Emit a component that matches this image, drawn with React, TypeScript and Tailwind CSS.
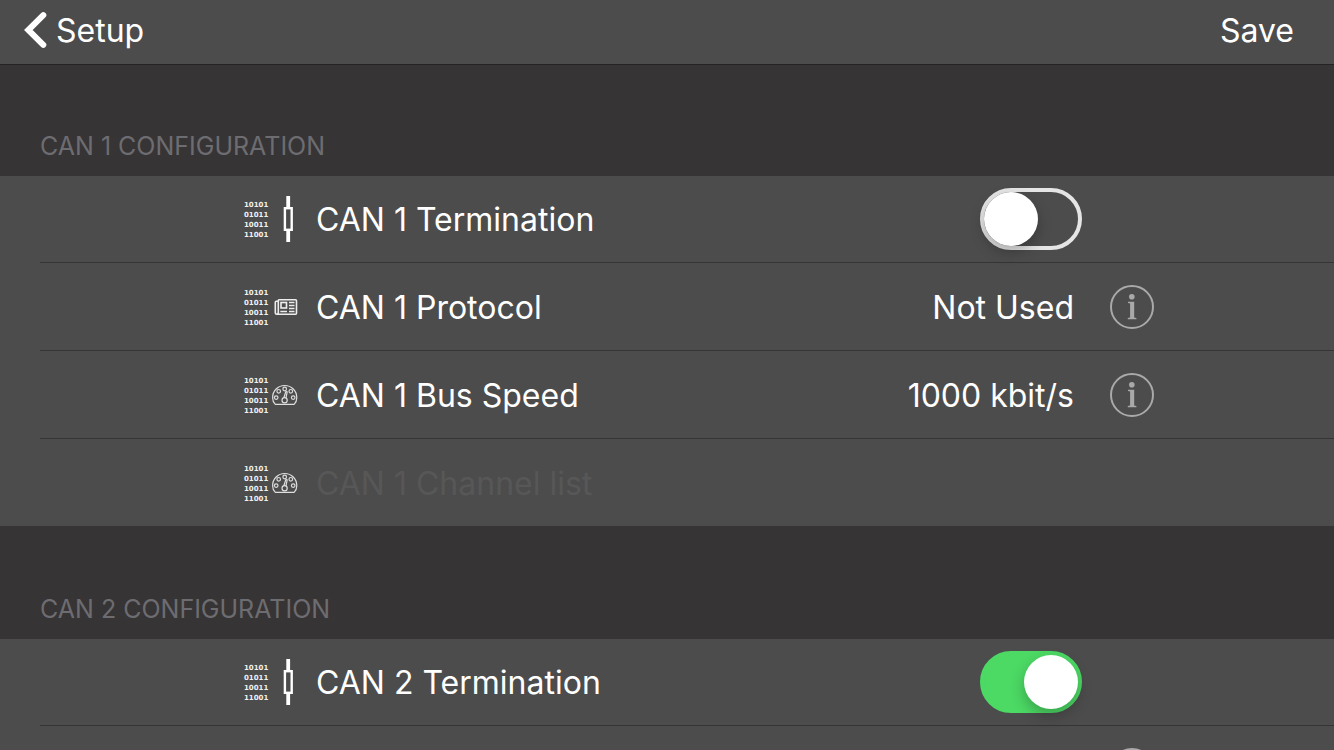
import { useState } from 'react';
import type { ReactNode } from 'react';

export default function App() {
  return (
    <div className="flex h-screen flex-col overflow-hidden bg-[#373435] text-white font-['Inter','Liberation_Sans',sans-serif]">
      <header className="flex h-[65px] shrink-0 items-center justify-between border-b border-[#252324] bg-[#4c4c4d] pr-10 pb-1 pl-6 text-[32px] leading-10">
        <button type="button" className="flex items-center gap-2">
          <svg className="h-9 w-6" viewBox="0 0 24 36" fill="none" stroke="currentColor" strokeWidth="6" strokeLinecap="round" strokeLinejoin="miter">
            <path d="M19.300 3.200 4.300 18l15 14.800" />
          </svg>
          <span className="pt-0.5">Setup</span>
        </button>
        <button type="button" className="pt-0.5">Save</button>
      </header>

      <main className="min-h-0 flex-1 overflow-y-auto [scrollbar-width:none]">
        <Section title="CAN 1 Configuration">
          <Row icon={<ResistorIcon />} label="CAN 1 Termination">
            <Toggle label="CAN 1 Termination" initial={false} />
          </Row>
          <Row icon={<NewsIcon />} label="CAN 1 Protocol">
            <Value text="Not Used" info="About CAN 1 Protocol" />
          </Row>
          <Row icon={<GaugeIcon />} label="CAN 1 Bus Speed">
            <Value text="1000 kbit/s" info="About CAN 1 Bus Speed" />
          </Row>
          <Row icon={<GaugeIcon />} label="CAN 1 Channel list" disabled />
        </Section>

        <Section title="CAN 2 Configuration">
          <Row icon={<ResistorIcon />} label="CAN 2 Termination">
            <Toggle label="CAN 2 Termination" initial={true} />
          </Row>
          <Row>
            <Value info="About CAN 2 Protocol" />
          </Row>
        </Section>
      </main>
    </div>
  );
}

function Section({ title, children }: { title: string; children: ReactNode }) {
  return (
    <section className="not-first:pt-0.5">
      <h2 className="flex h-[111px] items-end px-10 pb-3.5 text-[25px] leading-8 uppercase text-[#6d6c71]">{title}</h2>
      <ul className="bg-[#4c4c4d] pl-10">{children}</ul>
    </section>
  );
}

type RowProps = { icon?: ReactNode; label?: string; disabled?: boolean; children?: ReactNode };

function Row({ icon, label, disabled, children }: RowProps) {
  return (
    <li className="flex h-[88px] items-center border-t border-[#373436] pr-[180px] pl-[204px] text-[32px] leading-10 first:h-[86px] first:border-t-0">
      {icon && (
        <div className="flex shrink-0 items-center">
          <BinaryDigits />
          {icon}
        </div>
      )}
      <span className={`ml-[18px] flex-1 pt-0.5 ${disabled ? 'text-[#575757]' : ''}`}>{label}</span>
      {children}
    </li>
  );
}

function Toggle({ label, initial }: { label: string; initial: boolean }) {
  const [on, setOn] = useState(initial);
  return (
    <input
      type="checkbox"
      role="switch"
      aria-label={label}
      checked={on}
      onChange={(e) => setOn(e.target.checked)}
      className="mr-[72px] h-[62px] w-[102px] shrink-0 appearance-none rounded-full border-4 border-[#e5e5e5] transition-colors before:block before:size-[54px] before:rounded-full before:bg-white before:shadow-[0_6px_14px_rgba(0,0,0,0.25)] before:transition-transform checked:border-[#4cd964] checked:bg-[#4cd964] checked:before:translate-x-10"
    />
  );
}

function Value({ text, info }: { text?: string; info: string }) {
  return (
    <div className="flex items-center gap-9">
      {text && <span className="pt-0.5">{text}</span>}
      <button type="button" aria-label={info} className="text-[#a9a9a9]">
        <svg className="size-11" viewBox="0 0 44 44" fill="none">
          <circle cx="22" cy="22" r="21" stroke="currentColor" strokeWidth="2" />
          <circle cx="21.800" cy="11.800" r="2.800" fill="currentColor" />
          <path d="M18 16.800h6.200v15.700l2.200.5v1.200h-8.600V33l2.300-.5V18.600l-2.100-.5z" fill="currentColor" />
        </svg>
      </button>
    </div>
  );
}

/* Icons */

function BinaryDigits() {
  return (
    <div aria-hidden="true" className="w-[25px] pt-0.5 font-['DejaVu_Sans',sans-serif] text-[7px] leading-[10px] font-bold text-[#f0f0f0]">
      <div>10101</div>
      <div>01011</div>
      <div>10011</div>
      <div>11001</div>
    </div>
  );
}

function ResistorIcon() {
  return (
    <svg className="h-12 w-[29px]" viewBox="0 0 29 48" fill="none" stroke="white">
      <path d="M19.200 1v12M19.200 35v12" strokeWidth="3.800" />
      <rect x="15.900" y="13.200" width="6.800" height="21.600" strokeWidth="2.400" />
    </svg>
  );
}

function NewsIcon() {
  return (
    <svg className="h-12 w-[29px]" viewBox="0 0 29 48" fill="none" stroke="#ededed" strokeWidth="1.600">
      <path d="M9.300 16.700h17.200a1 1 0 0 1 1 1v12.600a1 1 0 0 1-1 1H8a1.700 1.700 0 0 1-1.700-1.700V19.300a1 1 0 0 1 1-1h2" />
      <path d="M9.300 16.700v13a1.600 1.600 0 0 1-1.300 1.600" />
      <rect x="12" y="19.500" width="5.500" height="5.500" />
      <path d="M20 19.500h5.500M20 22.500h5.500M20 25.500h5.500M11.300 28.500H18M20 28.500h5.500" strokeWidth="1.300" />
    </svg>
  );
}

function GaugeIcon() {
  return (
    <svg className="h-12 w-[29px]" viewBox="0 0 29 48" fill="none" stroke="#dedede" strokeWidth="1.200" strokeLinejoin="round">
      <path d="M6.300 33.400c-1.600-1.500-2.700-4-2.700-6.700 0-6.900 5.400-12.200 12.100-12.200s12.100 5.300 12.100 12.200c0 2.700-1.100 5.200-2.700 6.700z" />
      <circle cx="15.700" cy="18" r="1.800" />
      <circle cx="9.700" cy="20.300" r="1.800" />
      <circle cx="21.800" cy="20.300" r="1.800" />
      <circle cx="7.200" cy="26.600" r="1.800" />
      <circle cx="24.200" cy="26.600" r="1.800" />
      <circle cx="15.600" cy="29.200" r="2.600" />
      <path d="M14.800 26.800l2.100-6.300 1.300.4-1.300 6.200" />
    </svg>
  );
}
